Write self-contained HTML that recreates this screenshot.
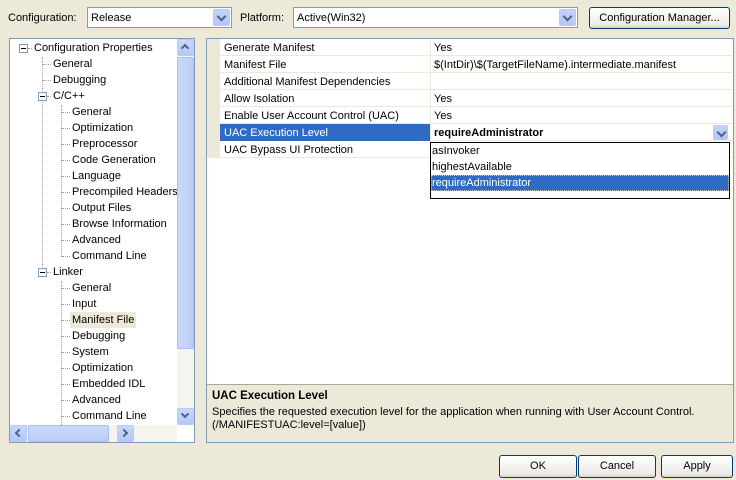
<!DOCTYPE html>
<html><head><style>
*{margin:0;padding:0;box-sizing:border-box}
body{width:736px;height:480px;background:#ECE9D8;font-family:"Liberation Sans",sans-serif;font-size:11px;color:#000;position:relative;overflow:hidden}
.a{position:absolute;white-space:nowrap}
.combo{position:absolute;background:#fff;border:1px solid #7F9DB9;height:21px}
.combo span{position:absolute;left:3px;top:4px}
.dd{position:absolute;right:1px;top:1px;width:17px;height:17px;background:linear-gradient(#C1D3FB,#B4C8F6);border:1px solid #B9CBF3;border-radius:2px}
.dd:after{content:"";position:absolute;left:4px;top:3px;width:5px;height:5px;border-right:2px solid #4D6185;border-bottom:2px solid #4D6185;transform:rotate(45deg)}
.btn{position:absolute;border:1px solid #003C74;border-radius:3px;background:linear-gradient(#FFFFFF,#ECEBE6 85%,#D6D0C5);text-align:center;line-height:21px}
.ti{position:absolute;height:15px;line-height:15px;white-space:nowrap}
.hd{position:absolute;border-top:1px dotted #A0A0A0;width:9px}
.vd{position:absolute;border-left:1px dotted #A0A0A0;width:0}
.ex{position:absolute;width:9px;height:9px;border:1px solid #7F9DB9;background:#fff}
.ex:after{content:"";position:absolute;left:1px;top:3px;width:5px;height:1px;background:#000}
.row{position:absolute;left:220px;width:513px;height:17px;border-bottom:1px solid #ECE9D8}
.row .n{position:absolute;left:4px;top:3px}
.row .v{position:absolute;left:214px;top:3px}
.row .sep{position:absolute;left:210px;top:0;height:17px;border-left:1px solid #ECE9D8}
</style></head><body>
<div class="a" style="left:8px;top:12px">Configuration:</div>
<div class="combo" style="left:87px;top:7px;width:145px"><span>Release</span><div class="dd"></div></div>
<div class="a" style="left:240px;top:12px">Platform:</div>
<div class="combo" style="left:293px;top:7px;width:285px"><span>Active(Win32)</span><div class="dd"></div></div>
<div class="btn" style="left:589px;top:7px;width:141px;height:22px">Configuration Manager...</div>

<!-- tree -->
<div class="a" style="left:9px;top:38px;width:186px;height:405px;background:#fff;border:1px solid #7F9DB9"></div>
<div class="vd" style="left:42px;top:57px;height:216px"></div>
<div class="vd" style="left:61px;top:105px;height:152px"></div>
<div class="vd" style="left:61px;top:281px;height:144px"></div>
<div class="ex" style="left:19px;top:44px"></div><div class="ti" style="left:34px;top:41px">Configuration Properties</div>
<div class="hd" style="left:28px;top:48px;width:4px"></div>
<div class="hd" style="left:43px;top:64px;width:8px"></div><div class="ti" style="left:53px;top:57px">General</div>
<div class="hd" style="left:43px;top:80px;width:8px"></div><div class="ti" style="left:53px;top:73px">Debugging</div>
<div class="hd" style="left:47px;top:96px;width:4px"></div><div class="ex" style="left:38px;top:92px"></div><div class="ti" style="left:53px;top:89px">C/C++</div>
<div class="hd" style="left:62px;top:112px;width:8px"></div><div class="ti" style="left:72px;top:105px">General</div>
<div class="hd" style="left:62px;top:128px;width:8px"></div><div class="ti" style="left:72px;top:121px">Optimization</div>
<div class="hd" style="left:62px;top:144px;width:8px"></div><div class="ti" style="left:72px;top:137px">Preprocessor</div>
<div class="hd" style="left:62px;top:160px;width:8px"></div><div class="ti" style="left:72px;top:153px">Code Generation</div>
<div class="hd" style="left:62px;top:176px;width:8px"></div><div class="ti" style="left:72px;top:169px">Language</div>
<div class="hd" style="left:62px;top:192px;width:8px"></div><div class="ti" style="left:72px;top:185px">Precompiled Headers</div>
<div class="hd" style="left:62px;top:208px;width:8px"></div><div class="ti" style="left:72px;top:201px">Output Files</div>
<div class="hd" style="left:62px;top:224px;width:8px"></div><div class="ti" style="left:72px;top:217px">Browse Information</div>
<div class="hd" style="left:62px;top:240px;width:8px"></div><div class="ti" style="left:72px;top:233px">Advanced</div>
<div class="hd" style="left:62px;top:256px;width:8px"></div><div class="ti" style="left:72px;top:249px">Command Line</div>
<div class="hd" style="left:47px;top:272px;width:4px"></div><div class="ex" style="left:38px;top:268px"></div><div class="ti" style="left:53px;top:265px">Linker</div>
<div class="hd" style="left:62px;top:288px;width:8px"></div><div class="ti" style="left:72px;top:281px">General</div>
<div class="hd" style="left:62px;top:304px;width:8px"></div><div class="ti" style="left:72px;top:297px">Input</div>
<div class="hd" style="left:62px;top:320px;width:8px"></div><div class="ti" style="left:70px;top:312px;height:16px;line-height:17px;background:#ECE9D8;padding:0 2px">Manifest File</div>
<div class="hd" style="left:62px;top:336px;width:8px"></div><div class="ti" style="left:72px;top:329px">Debugging</div>
<div class="hd" style="left:62px;top:352px;width:8px"></div><div class="ti" style="left:72px;top:345px">System</div>
<div class="hd" style="left:62px;top:368px;width:8px"></div><div class="ti" style="left:72px;top:361px">Optimization</div>
<div class="hd" style="left:62px;top:384px;width:8px"></div><div class="ti" style="left:72px;top:377px">Embedded IDL</div>
<div class="hd" style="left:62px;top:400px;width:8px"></div><div class="ti" style="left:72px;top:393px">Advanced</div>
<div class="hd" style="left:62px;top:416px;width:8px"></div><div class="ti" style="left:72px;top:409px">Command Line</div>
<!-- vscroll -->
<div class="a" style="left:177px;top:39px;width:17px;height:386px;background:#F5F4EF"></div>
<div class="a" style="left:177px;top:39px;width:17px;height:17px;background:linear-gradient(#C8D8FB,#B4C8F6);border:1px solid #B9CBF3;border-radius:2px"></div>
<div class="a" style="left:182px;top:45px;width:6px;height:6px;border-left:2px solid #4D6185;border-top:2px solid #4D6185;transform:rotate(45deg)"></div>
<div class="a" style="left:177px;top:57px;width:17px;height:292px;background:linear-gradient(90deg,#CCDAFB,#BACBF6);border:1px solid #A8BEF2;border-radius:2px"></div>
<div class="a" style="left:177px;top:408px;width:17px;height:17px;background:linear-gradient(#C8D8FB,#B4C8F6);border:1px solid #B9CBF3;border-radius:2px"></div>
<div class="a" style="left:182px;top:411px;width:6px;height:6px;border-right:2px solid #4D6185;border-bottom:2px solid #4D6185;transform:rotate(45deg)"></div>
<!-- hscroll -->
<div class="a" style="left:10px;top:425px;width:167px;height:17px;background:#F5F4EF"></div>
<div class="a" style="left:10px;top:425px;width:17px;height:17px;background:linear-gradient(#C8D8FB,#B4C8F6);border:1px solid #B9CBF3;border-radius:2px"></div>
<div class="a" style="left:16px;top:430px;width:6px;height:6px;border-left:2px solid #4D6185;border-bottom:2px solid #4D6185;transform:rotate(45deg)"></div>
<div class="a" style="left:28px;top:425px;width:81px;height:17px;background:linear-gradient(#CCDAFB,#BACBF6);border:1px solid #A8BEF2;border-radius:2px"></div>
<div class="a" style="left:117px;top:425px;width:17px;height:17px;background:linear-gradient(#C8D8FB,#B4C8F6);border:1px solid #B9CBF3;border-radius:2px"></div>
<div class="a" style="left:121px;top:430px;width:6px;height:6px;border-right:2px solid #4D6185;border-top:2px solid #4D6185;transform:rotate(45deg)"></div>

<!-- grid -->
<div class="a" style="left:206px;top:38px;width:528px;height:405px;border:1px solid #7F9DB9;background:#fff"></div>
<div class="a" style="left:207px;top:39px;width:13px;height:119px;background:#ECE9D8"></div>
<div class="row" style="top:39px"><span class="n">Generate Manifest</span><span class="sep"></span><span class="v">Yes</span></div>
<div class="row" style="top:56px"><span class="n">Manifest File</span><span class="sep"></span><span class="v">$(IntDir)\$(TargetFileName).intermediate.manifest</span></div>
<div class="row" style="top:73px"><span class="n">Additional Manifest Dependencies</span><span class="sep"></span></div>
<div class="row" style="top:90px"><span class="n">Allow Isolation</span><span class="sep"></span><span class="v">Yes</span></div>
<div class="row" style="top:107px"><span class="n">Enable User Account Control (UAC)</span><span class="sep"></span><span class="v">Yes</span></div>
<div class="row" style="top:124px"><div class="a" style="left:0;top:0;width:210px;height:17px;background:#316AC5"></div><span class="n" style="color:#fff">UAC Execution Level</span><span class="sep"></span><span class="v" style="font-weight:bold">requireAdministrator</span><div class="dd" style="right:5px;top:1px;width:15px;height:15px"></div></div>
<div class="row" style="top:141px"><span class="n">UAC Bypass UI Protection</span><span class="sep"></span></div>
<!-- dropdown list -->
<div class="a" style="left:430px;top:142px;width:300px;height:57px;background:#fff;border:1px solid #000"></div>
<div class="a" style="left:432px;top:145px">asInvoker</div>
<div class="a" style="left:432px;top:161px">highestAvailable</div>
<div class="a" style="left:431px;top:175px;width:298px;height:16px;background:#316AC5;border:1px dotted #C8C8C8"></div>
<div class="a" style="left:432px;top:177px;color:#fff">requireAdministrator</div>
<!-- description -->
<div class="a" style="left:207px;top:384px;width:526px;height:58px;background:#ECE9D8;border-top:1px solid #ACA899"></div>
<div class="a" style="left:212px;top:390px;font-weight:bold;font-size:11.5px">UAC Execution Level</div>
<div class="a" style="left:212px;top:406px">Specifies the requested execution level for the application when running with User Account Control.</div>
<div class="a" style="left:212px;top:419px">(/MANIFESTUAC:level=[value])</div>

<div class="btn" style="left:499px;top:455px;width:78px;height:23px">OK</div>
<div class="btn" style="left:578px;top:455px;width:78px;height:23px">Cancel</div>
<div class="btn" style="left:661px;top:455px;width:72px;height:23px">Apply</div>
</body></html>
